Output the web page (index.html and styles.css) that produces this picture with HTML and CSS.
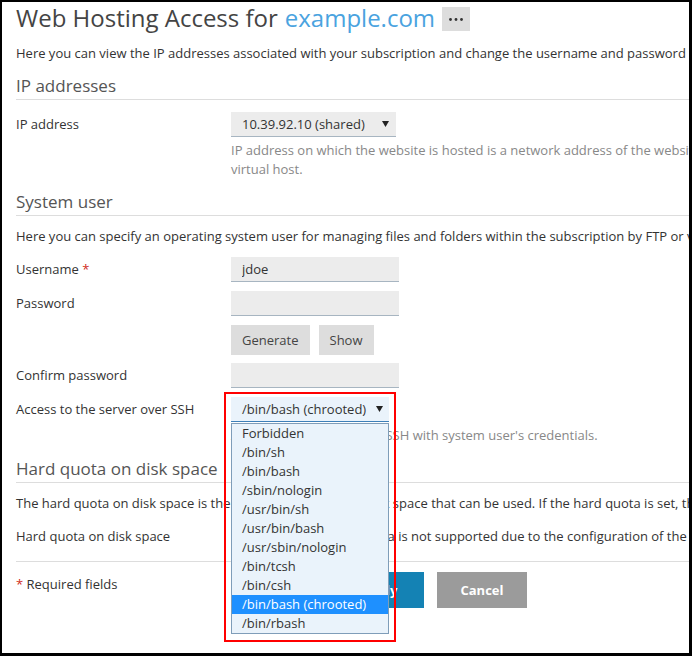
FILE: index.html
```html
<!DOCTYPE html>
<html>

<head>
	<meta name="viewport" content="width=device-width, initial-scale=1.0">
	<meta charset="UTF-8">
	<link rel="stylesheet" href="styles.css">
</head>

<body>

	<div class="frame">
		<div class="page">
			<h1 class="title">Web Hosting Access for <a href="#">example.com</a>
				<span class="more"><svg width="28" height="24" viewBox="0 0 28 24"><circle cx="8.5" cy="12.5" r="1.4" /><circle cx="14" cy="12.5" r="1.4" /><circle cx="19.5" cy="12.5" r="1.4" /></svg></span>
			</h1>
			<p class="intro">Here you can view the IP addresses associated with your subscription and change the username and password for accessing the subscription.</p>

			<div class="section">
				<h2>IP addresses</h2>
				<div class="row">
					<div class="label">IP address</div>
					<div class="field">
						<div class="select select-ip">10.39.92.10 (shared)<svg class="caret" width="7" height="6" viewBox="0 0 7 6"><polygon points="0,0 7,0 3.5,6" /></svg></div>
						<div class="help help-ip">IP address on which the website is hosted is a network address of the website's virtual host.</div>
					</div>
				</div>
			</div>

			<div class="section">
				<h2>System user</h2>
				<p class="intro">Here you can specify an operating system user for managing files and folders within the subscription by FTP or via SSH.</p>
				<div class="row">
					<div class="label">Username <span class="req">*</span></div>
					<div class="field"><input class="text" type="text" value="jdoe"></div>
				</div>
				<div class="row">
					<div class="label">Password</div>
					<div class="field"><input class="text" type="password"></div>
				</div>
				<div class="row">
					<div class="label"></div>
					<div class="field buttons">
						<button class="btn">Generate</button>
						<button class="btn">Show</button>
					</div>
				</div>
				<div class="row row-tight">
					<div class="label">Confirm password</div>
					<div class="field"><input class="text" type="password"></div>
				</div>
				<div class="row">
					<div class="label">Access to the server over SSH</div>
					<div class="field">
						<div class="shell">
							<div class="select select-open">/bin/bash (chrooted)<svg class="caret" width="7" height="6" viewBox="0 0 7 6"><polygon points="0,0 7,0 3.5,6" /></svg></div>
							<ul class="options">
								<li>Forbidden</li>
								<li>/bin/sh</li>
								<li>/bin/bash</li>
								<li>/sbin/nologin</li>
								<li>/usr/bin/sh</li>
								<li>/usr/bin/bash</li>
								<li>/usr/sbin/nologin</li>
								<li>/bin/tcsh</li>
								<li>/bin/csh</li>
								<li class="selected">/bin/bash (chrooted)</li>
								<li>/bin/rbash</li>
							</ul>
							<div class="mark"></div>
						</div>
						<div class="help">Access to the server over SSH with system user's credentials.</div>
					</div>
				</div>
			</div>

			<div class="section section-quota">
				<h2>Hard quota on disk space</h2>
				<p class="intro">The hard quota on disk space is the maximum amount of disk space that can be used. If the hard quota is set, the system will not allow writing more data.</p>
				<div class="row">
					<div class="label">Hard quota on disk space</div>
					<div class="field note">Setting the hard disk quota is not supported due to the configuration of the server.</div>
				</div>
			</div>

			<div class="row footer">
				<div class="label required"><span class="req">*</span> Required fields</div>
				<div class="field actions">
					<button class="action primary">OK</button>
					<button class="action primary">Apply</button>
					<button class="action cancel">Cancel</button>
				</div>
			</div>
		</div>
	</div>

</body>

</html>
```

FILE: styles.css
```css
body {
	margin: 0;
	font-family: "Open Sans", "DejaVu Sans", sans-serif;
	font-size: 13px;
	color: #333;
	background: #fff;
}

.frame {
	width: 692px;
	height: 656px;
	box-sizing: border-box;
	border: 2px solid #000;
	border-right-width: 3px;
	border-bottom-width: 3px;
	overflow: hidden;
	position: relative;
}

.page {
	width: 900px;
	padding: 1px 0 0 14px;
}

.title {
	margin: 0;
	font-size: 24px;
	line-height: 30px;
	font-weight: 400;
	color: #444;
	display: flex;
	align-items: center;
	gap: 7px;
}

.title a {
	color: #4aa3df;
	text-decoration: none;
}

.more {
	display: block;
	width: 28px;
	height: 24px;
	margin-top: 2px;
	background: #ddd;
}

.more svg {
	display: block;
	fill: #333;
}

.intro {
	margin: 11px 0 0;
	line-height: 19px;
	white-space: nowrap;
}

.section {
	margin-top: 12px;
}

.section-quota {
	margin-top: 13px;
}

.section h2 {
	margin: 0;
	font-size: 17px;
	line-height: 22px;
	font-weight: 400;
	color: #555;
	padding-bottom: 2px;
	border-bottom: 1px solid #ddd;
}

.row {
	display: grid;
	grid-template-columns: 215px 1fr;
	margin-top: 11px;
}

.section h2 + .row {
	margin-top: 12px;
}

.row + .row {
	margin-top: 9px;
}

.row + .row-tight {
	margin-top: 8px;
}

.label {
	line-height: 25px;
}

.req {
	color: #d02b20;
}

.select {
	box-sizing: border-box;
	height: 25px;
	line-height: 24px;
	padding: 0 6px 0 11px;
	display: flex;
	align-items: center;
	justify-content: space-between;
	white-space: nowrap;
	background: #ececec;
	border-bottom: 1px solid #a7b5c1;
}

.select-ip {
	width: 165px;
	padding-right: 7px;
}

.caret {
	fill: #222;
	flex: none;
}

.help {
	margin-top: 4px;
	width: 530px;
	line-height: 19px;
	color: #888;
}

.help-ip {
	width: 490px;
}

.text {
	display: block;
	box-sizing: border-box;
	width: 168px;
	height: 25px;
	margin: 0;
	padding: 0 11px;
	border: none;
	border-bottom: 1px solid #a7b5c1;
	background: #ececec;
	font: inherit;
	color: #333;
}

.buttons {
	display: flex;
	gap: 9px;
}

.btn {
	height: 30px;
	padding: 0 11px;
	border: none;
	background: #ddd;
	font: inherit;
	color: #444;
}

.shell {
	position: relative;
	width: 158px;
}

.select-open {
	background: #eaf3fb;
	border-bottom-color: #3d7fb8;
}

.options {
	position: absolute;
	top: 26px;
	left: 0;
	width: 158px;
	box-sizing: border-box;
	margin: 0;
	padding: 0;
	list-style: none;
	background: #eaf3fb;
	border: 1px solid #7f9db9;
	z-index: 2;
}

.options li {
	height: 19px;
	line-height: 19px;
	padding-left: 10px;
	white-space: nowrap;
}

.options .selected {
	background: #1e90ff;
	color: #fff;
}

/* red outline drawn round the open shell list */
.mark {
	position: absolute;
	left: -7px;
	top: -5px;
	width: 172px;
	height: 250px;
	box-sizing: border-box;
	border: 2px solid #f00;
	z-index: 3;
}

.note {
	line-height: 25px;
	white-space: nowrap;
}

.footer {
	margin-top: 12px;
	padding-top: 10px;
	border-top: 1px solid #ddd;
}

.required {
	line-height: 19px;
	margin-top: 3px;
}

.actions {
	display: flex;
	gap: 13px;
}

.action {
	height: 36px;
	min-width: 90px;
	padding: 0 22px;
	border: none;
	font: inherit;
	font-weight: 700;
	color: #fff;
}

.primary {
	background: #1482b4;
}

.cancel {
	background: #9b9b9b;
}
```
